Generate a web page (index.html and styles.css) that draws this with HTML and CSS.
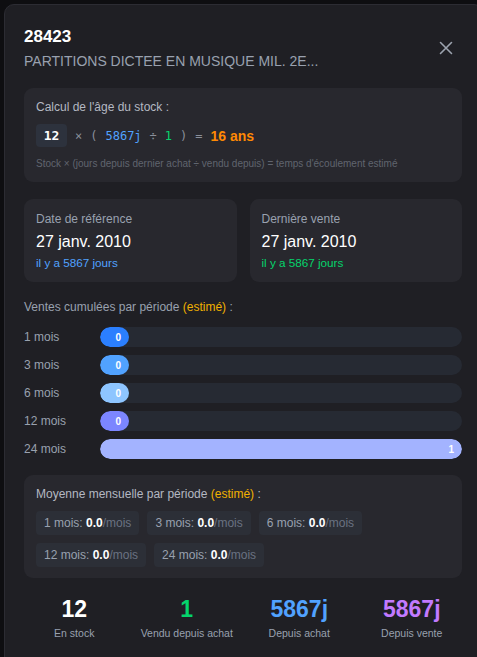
FILE: index.html
```html
<!DOCTYPE html>
<html lang="fr">
<head>
<meta charset="utf-8">
<title>28423</title>
<link rel="stylesheet" href="styles.css">
</head>
<body>
<div class="modal">
  <header class="head">
    <div class="head-text">
      <h1 class="title">28423</h1>
      <div class="subtitle">PARTITIONS DICTEE EN MUSIQUE MIL. 2E...</div>
    </div>
    <button class="close" aria-label="Fermer">
      <svg width="14" height="14" viewBox="0 0 14 14"><path d="M1.5 1.5 L12.5 12.5 M12.5 1.5 L1.5 12.5" stroke="#9ca3af" stroke-width="1.6" stroke-linecap="round" fill="none"/></svg>
    </button>
  </header>

  <section class="card calc">
    <div class="card-title">Calcul de l'âge du stock :</div>
    <div class="formula">
      <span class="badge">12</span>
      <span class="op">×</span>
      <span class="op">(</span>
      <span class="mono blue">5867j</span>
      <span class="op">÷</span>
      <span class="mono green">1</span>
      <span class="op">)</span>
      <span class="op">=</span>
      <span class="result">16 ans</span>
    </div>
    <div class="hint">Stock × (jours depuis dernier achat ÷ vendu depuis) = temps d'écoulement estimé</div>
  </section>

  <div class="dates">
    <section class="card date-card">
      <div class="label">Date de référence</div>
      <div class="date">27 janv. 2010</div>
      <div class="ago blue">il y a 5867 jours</div>
    </section>
    <section class="card date-card">
      <div class="label">Dernière vente</div>
      <div class="date">27 janv. 2010</div>
      <div class="ago green">il y a 5867 jours</div>
    </section>
  </div>

  <div class="section-title">Ventes cumulées par période <span class="est">(estimé)</span> :</div>
  <div class="bars">
    <div class="bar-label">1 mois</div>
    <div class="track"><div class="fill c1" style="width:0%"><span>0</span></div></div>
    <div class="bar-label">3 mois</div>
    <div class="track"><div class="fill c2" style="width:0%"><span>0</span></div></div>
    <div class="bar-label">6 mois</div>
    <div class="track"><div class="fill c3" style="width:0%"><span>0</span></div></div>
    <div class="bar-label">12 mois</div>
    <div class="track"><div class="fill c4" style="width:0%"><span>0</span></div></div>
    <div class="bar-label">24 mois</div>
    <div class="track"><div class="fill c5" style="width:100%"><span>1</span></div></div>
  </div>

  <section class="card avg">
    <div class="card-title">Moyenne mensuelle par période <span class="est">(estimé)</span> :</div>
    <div class="chips">
      <span class="chip">1 mois: <b>0.0</b><i>/mois</i></span>
      <span class="chip">3 mois: <b>0.0</b><i>/mois</i></span>
      <span class="chip">6 mois: <b>0.0</b><i>/mois</i></span>
      <span class="chip">12 mois: <b>0.0</b><i>/mois</i></span>
      <span class="chip">24 mois: <b>0.0</b><i>/mois</i></span>
    </div>
  </section>

  <div class="stats">
    <div class="stat"><div class="num white">12</div><div class="stat-label">En stock</div></div>
    <div class="stat"><div class="num green">1</div><div class="stat-label">Vendu depuis achat</div></div>
    <div class="stat"><div class="num blue">5867j</div><div class="stat-label">Depuis achat</div></div>
    <div class="stat"><div class="num purple">5867j</div><div class="stat-label">Depuis vente</div></div>
  </div>
</div>
</body>
</html>
```
FILE: styles.css
```css
html, body {
  margin: 0;
  padding: 0;
  height: 100%;
  overflow: hidden;
  background: #0e0e11;
  font-family: "Liberation Sans", Arial, sans-serif;
}
body {
  padding: 4px 0 0 4px;
  box-sizing: border-box;
}
.modal {
  width: 480px;
  min-height: 700px;
  box-sizing: border-box;
  background: #1f1f24;
  border: 1px solid #2c2c33;
  border-radius: 10px;
  padding: 22px 20px 20px 19px;
}
.head {
  display: flex;
  justify-content: space-between;
  align-items: flex-start;
  width: 438px;
}
.title {
  margin: 0;
  font-size: 17px;
  line-height: 20px;
  font-weight: 700;
  color: #ffffff;
}
.subtitle {
  margin-top: 5px;
  font-size: 14px;
  line-height: 18px;
  color: #99a1af;
}
.close {
  background: none;
  border: 0;
  padding: 0;
  margin: 14px 9px 0 0;
  width: 14px;
  height: 14px;
  display: flex;
}
.card {
  background: #28282e;
  border-radius: 9px;
  box-sizing: border-box;
}
.calc {
  width: 438px;
  margin-top: 18px;
  padding: 11px 12px 12px;
}
.card-title {
  font-size: 12px;
  line-height: 16px;
  color: #b4b8c2;
}
.formula {
  display: flex;
  align-items: center;
  gap: 8px;
  margin-top: 9px;
  height: 23px;
}
.badge {
  display: inline-flex;
  align-items: center;
  justify-content: center;
  width: 31px;
  height: 23px;
  border-radius: 4px;
  background: #2d323d;
  color: #ffffff;
  font-family: "DejaVu Sans Mono", monospace;
  font-weight: 700;
  font-size: 13px;
}
.op {
  font-family: "DejaVu Sans Mono", monospace;
  font-size: 12px;
  color: #8a8f9a;
}
.mono {
  font-family: "DejaVu Sans Mono", monospace;
  font-size: 12px;
}
.result {
  font-size: 14px;
  font-weight: 700;
  color: #ff8904;
}
.hint {
  margin-top: 10px;
  font-size: 10px;
  line-height: 13px;
  color: #60656f;
}
.blue { color: #51a2ff; }
.green { color: #05d46c; }
.white { color: #ffffff; }
.purple { color: #c27aff; }
.dates {
  display: grid;
  grid-template-columns: 1fr 1fr;
  gap: 13px;
  width: 438px;
  margin-top: 17px;
}
.date-card {
  padding: 12px 12px 12px;
  height: 83px;
}
.label {
  font-size: 12px;
  line-height: 16px;
  color: #99a1af;
}
.date {
  margin-top: 5px;
  font-size: 16px;
  line-height: 20px;
  color: #ffffff;
}
.ago {
  margin-top: 3px;
  font-size: 11.7px;
  line-height: 15px;
}
.section-title {
  margin-top: 17px;
  font-size: 12px;
  line-height: 16px;
  color: #99a1af;
}
.est { color: #f0b100; }
.bars {
  display: grid;
  grid-template-columns: 76px 1fr;
  row-gap: 8px;
  align-items: center;
  width: 438px;
  margin-top: 12px;
}
.bar-label {
  font-size: 12px;
  line-height: 16px;
  color: #99a1af;
}
.track {
  height: 20px;
  border-radius: 10px;
  background: #262a33;
  overflow: hidden;
}
.fill {
  height: 100%;
  min-width: 29px;
  border-radius: 10px;
  display: flex;
  align-items: center;
  justify-content: flex-end;
  padding-right: 8px;
  box-sizing: border-box;
}
.fill span {
  font-size: 10px;
  font-weight: 700;
  color: #ffffff;
}
.c1 { background: #2b7fff; }
.c2 { background: #51a2ff; }
.c3 { background: #8ec5ff; }
.c4 { background: #7c86ff; }
.c5 { background: #a3b3ff; }
.avg {
  width: 438px;
  margin-top: 16px;
  padding: 11px 12px 11px;
}
.chips {
  display: flex;
  flex-wrap: wrap;
  gap: 8px;
  margin-top: 9px;
}
.chip {
  display: inline-flex;
  align-items: center;
  height: 24px;
  padding: 0 8px;
  border-radius: 4px;
  background: #2c2f37;
  font-size: 12px;
  color: #99a1af;
  white-space: pre;
}
.chip b {
  font-weight: 700;
  color: #ffffff;
}
.chip i {
  font-style: normal;
  color: #6a7282;
}
.stats {
  display: grid;
  grid-template-columns: repeat(4, 1fr);
  gap: 12px;
  width: 438px;
  margin-top: 17px;
}
.stat {
  text-align: center;
}
.num {
  font-size: 23px;
  line-height: 28px;
  font-weight: 700;
}
.stat-label {
  margin-top: 3px;
  font-size: 10.5px;
  line-height: 14px;
  color: #99a1af;
}
```
